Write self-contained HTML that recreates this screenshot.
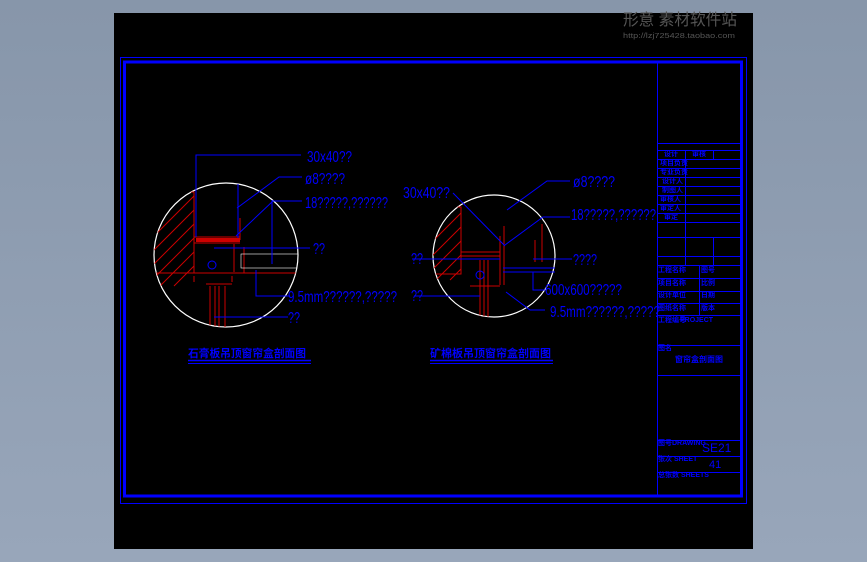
<!DOCTYPE html>
<html><head><meta charset="utf-8"><style>
html,body{margin:0;padding:0;width:867px;height:562px;overflow:hidden;background:linear-gradient(#8796aa,#98a6ba);}
svg{position:absolute;left:0;top:0}
text{font-family:"Liberation Sans","Noto Sans CJK SC",sans-serif}
</style></head><body>
<svg width="867" height="562" viewBox="0 0 867 562">
<defs>
<clipPath id="c1"><circle cx="226" cy="255" r="72"/></clipPath>
<clipPath id="c2"><circle cx="494" cy="256" r="61"/></clipPath>
</defs>
<rect x="114" y="13" width="639" height="536" fill="#000"/>
<text x="623" y="25" font-size="16" fill="#555" font-family="Noto Sans CJK SC,sans-serif" textLength="114" lengthAdjust="spacingAndGlyphs">形意 素材软件站</text>
<text x="623" y="38" font-size="7" fill="#555" font-family="Liberation Mono,monospace" textLength="112" lengthAdjust="spacingAndGlyphs">http://lzj725428.taobao.com</text>
<rect x="120.5" y="57.5" width="626" height="446" fill="none" stroke="#00f" stroke-width="1"/>
<rect x="124.5" y="62" width="617" height="434" fill="none" stroke="#00f" stroke-width="3"/>
<g stroke="#00f" stroke-width="1" fill="none">
<line x1="657.5" y1="62" x2="657.5" y2="496"/>
<line x1="657" y1="143.5" x2="741" y2="143.5"/>
<line x1="657" y1="150.5" x2="741" y2="150.5"/>
<line x1="657" y1="159.5" x2="741" y2="159.5"/>
<line x1="657" y1="168.5" x2="741" y2="168.5"/>
<line x1="657" y1="177.5" x2="741" y2="177.5"/>
<line x1="657" y1="186.5" x2="741" y2="186.5"/>
<line x1="657" y1="195.5" x2="741" y2="195.5"/>
<line x1="657" y1="204.5" x2="741" y2="204.5"/>
<line x1="657" y1="213.5" x2="741" y2="213.5"/>
<line x1="657" y1="222.5" x2="741" y2="222.5"/>
<line x1="657" y1="237.5" x2="741" y2="237.5"/>
<line x1="657" y1="256.5" x2="741" y2="256.5"/>
<line x1="657" y1="265.5" x2="741" y2="265.5"/>
<line x1="657" y1="278.5" x2="741" y2="278.5"/>
<line x1="657" y1="291.5" x2="741" y2="291.5"/>
<line x1="657" y1="303.5" x2="741" y2="303.5"/>
<line x1="657" y1="315.5" x2="741" y2="315.5"/>
<line x1="657" y1="345.5" x2="741" y2="345.5"/>
<line x1="657" y1="375.5" x2="741" y2="375.5"/>
<line x1="657" y1="440.5" x2="741" y2="440.5"/>
<line x1="657" y1="456.5" x2="741" y2="456.5"/>
<line x1="657" y1="472.5" x2="741" y2="472.5"/>
<line x1="685.5" y1="150" x2="685.5" y2="159"/>
<line x1="713.5" y1="150" x2="713.5" y2="159"/>
<line x1="685.5" y1="159" x2="685.5" y2="237"/>
<line x1="699.5" y1="265" x2="699.5" y2="315"/>
<line x1="685.5" y1="237" x2="685.5" y2="265"/>
<line x1="713.5" y1="237" x2="713.5" y2="265"/>
</g>
<g fill="#00f" font-size="7" font-weight="bold">
<text x="664" y="156">设计</text><text x="692" y="156">审核</text>
<text x="660" y="165">项目负责</text><text x="660" y="174">专业负责</text><text x="662" y="183">设计人</text>
<text x="662" y="192">制图人</text><text x="660" y="201">审核人</text><text x="660" y="210">审定人</text><text x="664" y="219">审定</text>
<text x="658" y="272">工程名称</text><text x="701" y="272">图号</text>
<text x="658" y="285">项目名称</text><text x="701" y="285">比例</text>
<text x="658" y="297">设计单位</text><text x="701" y="297">日期</text>
<text x="658" y="310">图纸名称</text><text x="701" y="310">版本</text>
<text x="658" y="322">工程编号</text><text x="680" y="322">PROJECT</text>
<text x="658" y="350">图名</text>
<text x="675" y="362" font-size="8">窗帘盒剖面图</text>
<text x="658" y="445">图号DRAWING</text>
<text x="658" y="461">张次 SHEET</text>
<text x="658" y="477">总张数 SHEETS</text>
</g>
<text x="702" y="452" font-size="12" fill="#00f">SE21</text>
<text x="709" y="468" font-size="11" fill="#00f">41</text>

<circle cx="226" cy="255" r="72" fill="none" stroke="#fff" stroke-width="1.2"/>
<g clip-path="url(#c1)" stroke="#c00" stroke-width="1" fill="none">
<rect x="150" y="192" width="44" height="81"/>
<path d="M150 212L194 168M150 226L194 182M150 240L194 196M150 254L194 210M150 268L194 224M150 282L194 238M160 286L194 252M174 286L194 266"/>
<path d="M194 273H270M194 237H240M194 243H240M234 244V272M240 218V240M244 247V273H297M210 286V328M215 286V328M219 286V328M225 286V328M206 284H232M194 276V282M232 276V282"/>
<rect x="241" y="254" width="58" height="14" stroke="#fff" stroke-width="0.6"/>
</g>
<g stroke="#00f" stroke-width="1" fill="none">
<path d="M196 237V155H301"/>
<path d="M237 208L279 177H302"/>
<path d="M236 236L273 201H302"/>
<path d="M214 248H310"/>
<path d="M256 270V296H290"/>
<path d="M214 317H288"/>
<path d="M238 184V238M272 200V264"/>
</g>
<rect x="196" y="238" width="44" height="4" fill="#c00"/>
<circle cx="212" cy="265" r="4" fill="none" stroke="#00f"/>
<g fill="#00f" font-size="16">
<text x="307" y="162" textLength="45" lengthAdjust="spacingAndGlyphs">30x40??</text>
<text x="305" y="184" textLength="40" lengthAdjust="spacingAndGlyphs">ø8????</text>
<text x="305" y="208" textLength="83" lengthAdjust="spacingAndGlyphs">18?????,??????</text>
<text x="313" y="254" textLength="12" lengthAdjust="spacingAndGlyphs">??</text>
<text x="288" y="302" textLength="109" lengthAdjust="spacingAndGlyphs">9.5mm??????,?????</text>
<text x="288" y="323" textLength="12" lengthAdjust="spacingAndGlyphs">??</text>
</g>
<text x="188" y="357" font-size="11" fill="#00f" font-family="Noto Sans CJK SC,sans-serif" font-weight="bold" textLength="118" lengthAdjust="spacingAndGlyphs">石膏板吊顶窗帘盒剖面图</text>
<line x1="188" y1="360.5" x2="311" y2="360.5" stroke="#00f" stroke-width="1.5"/>
<line x1="188" y1="363.5" x2="311" y2="363.5" stroke="#00f"/>

<circle cx="494" cy="256" r="61" fill="none" stroke="#fff" stroke-width="1.2"/>
<g clip-path="url(#c2)" stroke="#c00" stroke-width="1" fill="none">
<rect x="430" y="207" width="31" height="67"/>
<path d="M430 230L461 199M430 244L461 213M430 258L461 227M430 272L461 241M436 280L461 255M450 280L461 269"/>
<path d="M461 252H500M461 256H500M500 236V285M504 226V285M470 286H500M480 260V320M484 260V320M488 260V320M535 240V262M542 224V262"/>
</g>
<g stroke="#00f" stroke-width="1" fill="none">
<path d="M507 210L547 181H570"/>
<path d="M505 245L543 217H570"/>
<path d="M503 268H555M503 272H555"/>
<path d="M533 259H572"/>
<path d="M533 272V290H545"/>
<path d="M506 292L530 310H545"/>
<path d="M412 259H500"/>
<path d="M414 296H480"/>
<path d="M453 193L505 246"/>
</g>
<circle cx="480" cy="275" r="4" fill="none" stroke="#00f"/>
<g fill="#00f" font-size="16">
<text x="403" y="198" textLength="47" lengthAdjust="spacingAndGlyphs">30x40??</text>
<text x="573" y="187" textLength="42" lengthAdjust="spacingAndGlyphs">ø8????</text>
<text x="571" y="220" textLength="85" lengthAdjust="spacingAndGlyphs">18?????,??????</text>
<text x="411" y="264" textLength="12" lengthAdjust="spacingAndGlyphs">??</text>
<text x="573" y="265" textLength="24" lengthAdjust="spacingAndGlyphs">????</text>
<text x="545" y="295" textLength="77" lengthAdjust="spacingAndGlyphs">600x600?????</text>
<text x="411" y="301" textLength="12" lengthAdjust="spacingAndGlyphs">??</text>
<text x="550" y="317" textLength="110" lengthAdjust="spacingAndGlyphs">9.5mm??????,?????</text>
</g>
<text x="430" y="357" font-size="11" fill="#00f" font-family="Noto Sans CJK SC,sans-serif" font-weight="bold" textLength="121" lengthAdjust="spacingAndGlyphs">矿棉板吊顶窗帘盒剖面图</text>
<line x1="430" y1="360.5" x2="553" y2="360.5" stroke="#00f" stroke-width="1.5"/>
<line x1="430" y1="363.5" x2="553" y2="363.5" stroke="#00f"/>
</svg>
</body></html>
